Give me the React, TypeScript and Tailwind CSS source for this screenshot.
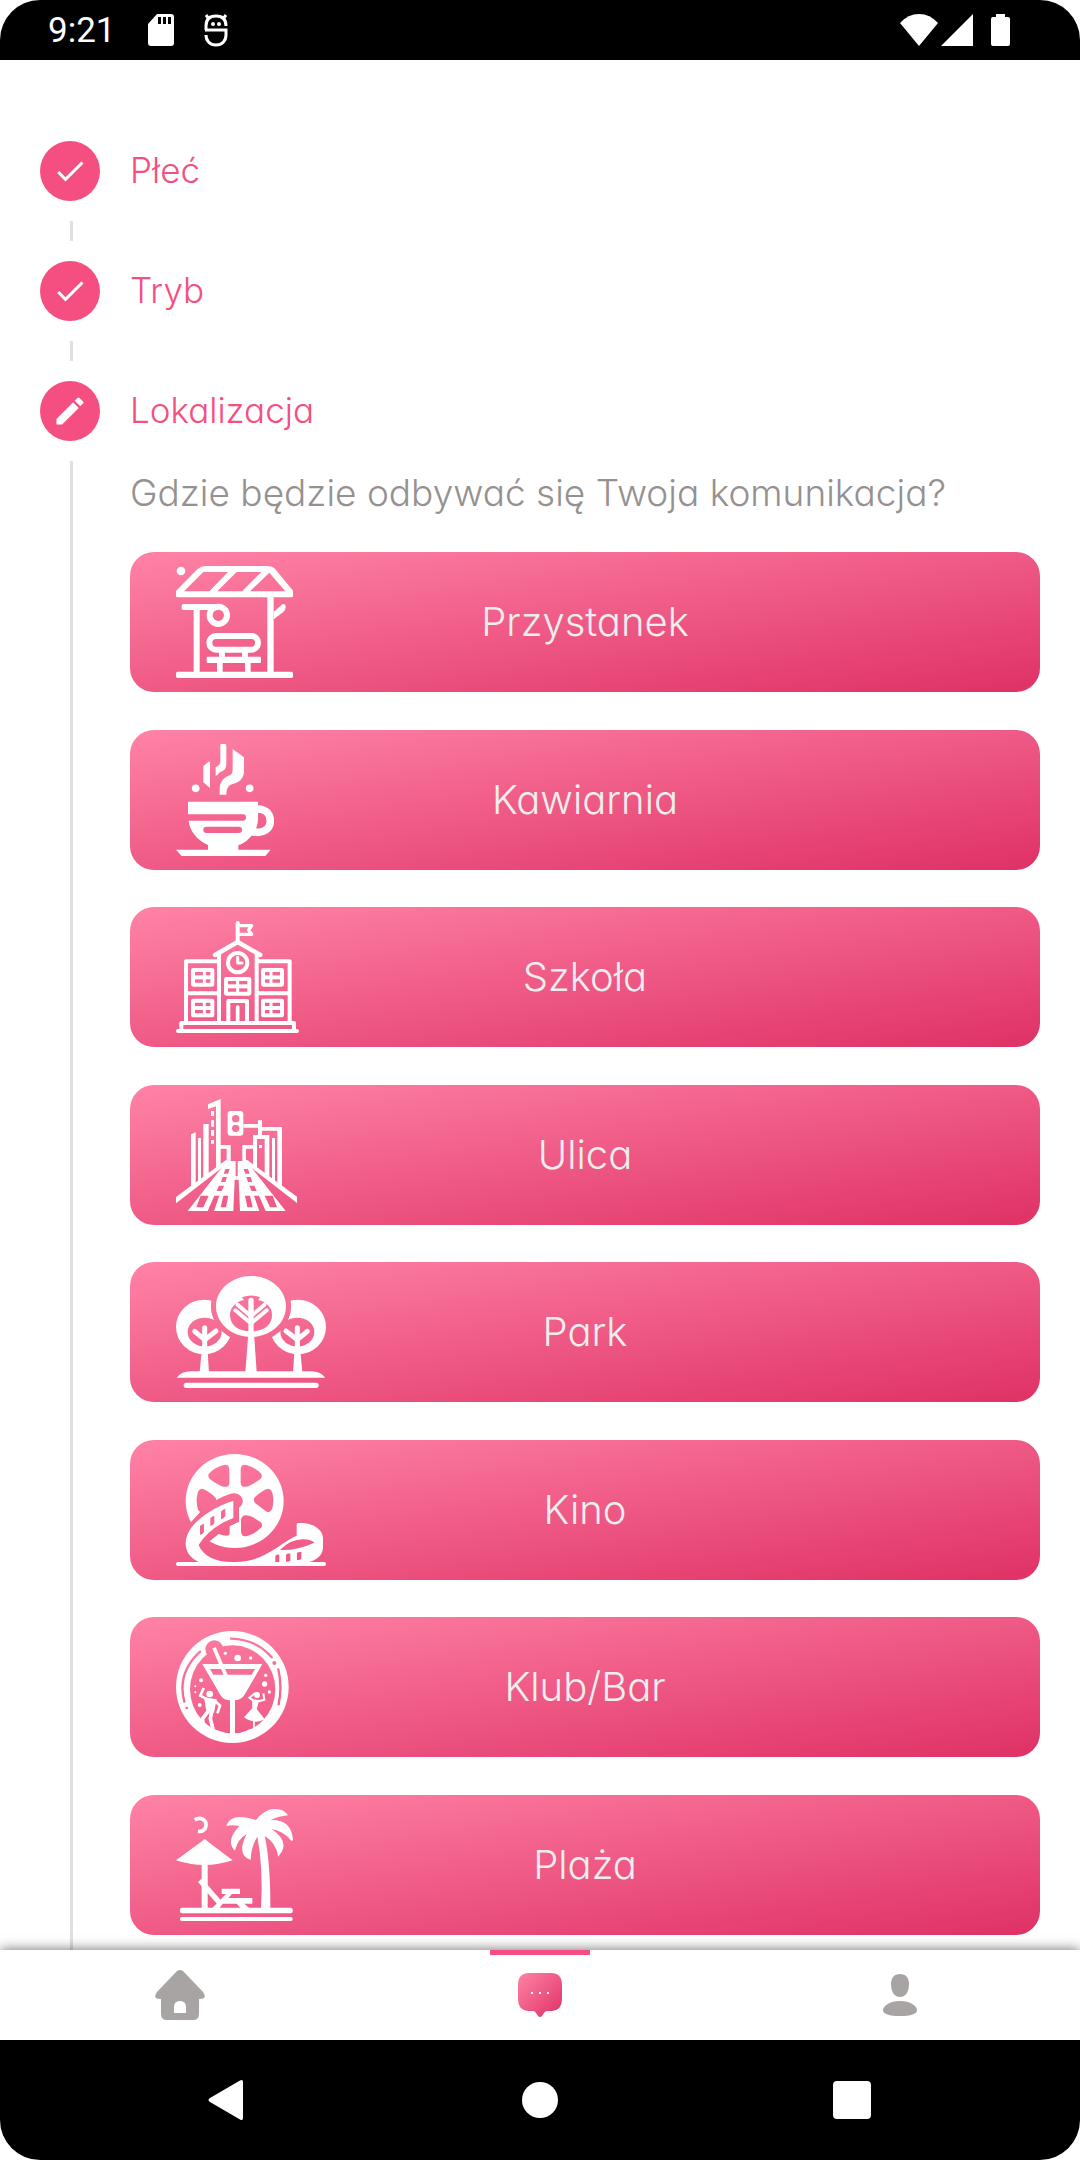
import React, { useState } from 'react';

function BusStopIcon() {
  return (
    <svg viewBox="168 78 351 336" className="h-28 w-auto" fill="#fff" aria-hidden="true">
      <circle cx="183" cy="93" r="13" />
      <path
        fillRule="evenodd"
        d="M168 168V153L232 88Q243 78 256 78H440Q457 78 466 88L519 152V168Q519 172 515 172H172Q168 172 168 168ZM192 154H268L324 96H250ZM292 154H366L424 96H350ZM390 154H496L448 98Z"
      />
      <rect x="168" y="395" width="351" height="19" rx="5" />
      <rect x="442" y="168" width="19" height="230" />
      <path d="M461 216L487 193Q497 190 497 200Q497 210 490 216L461 238Z" />
      <rect x="221" y="205" width="18" height="195" />
      <path d="M190 192H295V210H190Q185 210 185 205V197Q185 192 190 192Z" mask="url(#bus-sign)" />
      <mask id="bus-sign" maskUnits="userSpaceOnUse" x="160" y="70" width="370" height="350">
        <rect x="160" y="70" width="370" height="350" fill="#fff" />
        <circle cx="295" cy="226" r="26" fill="#000" />
      </mask>
      <circle cx="295" cy="226" r="26" fill="none" stroke="#fff" strokeWidth="18" />
      <rect x="268" y="288" width="146" height="41" rx="20" fill="none" stroke="#fff" strokeWidth="18" />
      <rect x="297" y="335" width="18" height="18" />
      <rect x="366" y="335" width="18" height="18" />
      <rect x="260" y="350" width="163" height="19" rx="3" />
      <rect x="291" y="366" width="17" height="32" />
      <rect x="375" y="366" width="17" height="32" />
    </svg>
  );
}

function CafeIcon() {
  return (
    <svg viewBox="168 72 295 336" className="h-28 w-auto" fill="#fff" aria-hidden="true">
      <path d="M250 138L266 125H270V204L250 187Z" />
      <path d="M301 75Q301 72 304 72H315Q319 72 319 76V128C319 150 312 150 301 156Q294 160 293 165L287 167V142Q301 134 301 126Z" />
      <path d="M338 87L372 112V153C372 180 352 189 338 192C325 196 320 205 319 224H299V208C299 185 312 172 330 166Q338 161 338 148Z" />
      <circle cx="227" cy="205" r="11.5" />
      <circle cx="389" cy="205" r="11.5" />
      <path
        fillRule="evenodd"
        d="M204 245H414V300C412 335 385 365 355 376V389H452L436 408H185L168 389H264V375C230 360 208 330 206 302H370Q378 302 378 292Q378 283 370 283H204ZM260 320Q250 320 250 329.500Q250 339 260 339H356Q366 339 366 329.500Q366 320 356 320Z"
      />
      <path d="M412 267C440 267 451 285 451 302C451 326 430 343 398 335" fill="none" stroke="#fff" strokeWidth="23" />
    </svg>
  );
}

function SchoolWindow({ x, y, w, bar }: { x: number; y: number; w: number; bar: number }) {
  return (
    <g>
      <rect x={x + 6} y={y + 6} width={w - 12} height="44" rx="1" strokeWidth="12" />
      <path d={`M${bar} ${y + 8}V${y + 48}`} strokeWidth="9" />
      <path d={`M${x + 8} ${y + 28}H${x + w - 8}`} strokeWidth="12" />
    </g>
  );
}

function SchoolIcon() {
  return (
    <svg viewBox="168 63 369 336" className="h-28 w-auto" fill="none" stroke="#fff" strokeWidth="12" strokeLinejoin="round" aria-hidden="true">
      <path d="M353 69V124" strokeLinecap="round" />
      <path d="M353 77H395L386 90L395 103H353" strokeWidth="10" />
      <path d="M285 165L353 126L421 165" strokeWidth="13" strokeLinecap="round" />
      <path d="M297 160V365M410 160V365" />
      <circle cx="353" cy="188" r="29" />
      <path d="M353 172V189H366" strokeWidth="9" strokeLinecap="round" />
      <path d="M198 365V184H293M509 365V184H414M198 280H297M410 280H509" />
      <SchoolWindow x={213} y={204} w={70} bar={253} />
      <SchoolWindow x={213} y={296} w={70} bar={253} />
      <SchoolWindow x={423} y={204} w={69} bar={453} />
      <SchoolWindow x={423} y={296} w={69} bar={453} />
      <SchoolWindow x={312} y={231} w={82} bar={353} />
      <path d="M325 365V303H381V365" />
      <path d="M353 365V321" strokeLinecap="round" strokeWidth="11" />
      <path d="M184 390V369H522V390" />
      <path d="M174 393H531" strokeLinecap="round" />
    </svg>
  );
}

function HalfRoad() {
  return (
    <>
      <path d="M168 351L318 240L332 243L300 268L168 370Z" />
      <path
        fillRule="evenodd"
        d="M203 393L306 262L330 243H347V288H350V299H344L340 393H282L298 347H283L263 393ZM242 347H266L250 382H229ZM310 347H325L318 382H302ZM316 267H329L324 281H311ZM308 291H321L316 306H303ZM297 317H312L305 333H290Z"
      />
    </>
  );
}

function StreetIcon() {
  return (
    <svg viewBox="168 57 363 336" className="h-28 w-auto" fill="#fff" aria-hidden="true">
      <path d="M264 73L302 57V256L288 266V79L264 87Z" />
      <path d="M273 93H282V108H273ZM273 121H282V140H273ZM273 150H282V167H273ZM273 180H282V191H273Z" />
      <path d="M250 132H266V284L250 295ZM234 174H243V300L234 306ZM213 163L227 157V310L213 320Z" />
      <path
        fillRule="evenodd"
        d="M332 93H361Q370 93 370 102V158Q370 167 361 167H332Q323 167 323 158V102Q323 93 332 93ZM347 105A11 11 0 1 0 347 127A11 11 0 1 0 347 105ZM347 134A11 11 0 1 0 347 156A11 11 0 1 0 347 134Z"
      />
      <path d="M370 132H414V121H426V141H486V320L472 310V152H426V165H448V292L434 282V177H411V265L399 256V165H414V143H370Z" />
      <path d="M417 195H426V204H417ZM456 174H465V303L456 297Z" />
      <path d="M300 195H332V245H320V206H300ZM399 195V206H378V245H367V195Z" />
      <HalfRoad />
      <g transform="matrix(-1 0 0 1 700 0)">
        <HalfRoad />
      </g>
    </svg>
  );
}

function SideTree() {
  return (
    <>
      <ellipse cx="252" cy="216" rx="84" ry="82" mask="url(#side-tree)" />
      <path d="M254 218V300M224 229L254 254M288 228L254 254" fill="none" stroke="#fff" strokeWidth="15" strokeLinecap="round" />
      <path d="M246 275L239 352H267L262 275Z" />
    </>
  );
}

function ParkIcon() {
  return (
    <svg viewBox="168 63 450 336" className="h-28 w-auto" fill="#fff" aria-hidden="true">
      <mask id="side-tree" maskUnits="userSpaceOnUse" x="160" y="60" width="470" height="340">
        <rect x="160" y="60" width="470" height="340" fill="#fff" />
        <ellipse cx="254" cy="231" rx="51" ry="43" fill="#000" />
        <ellipse cx="393" cy="154" rx="120" ry="108" fill="#000" />
      </mask>
      <mask id="side-branches" maskUnits="userSpaceOnUse" x="160" y="60" width="470" height="340">
        <rect x="160" y="60" width="470" height="340" fill="#fff" />
        <ellipse cx="393" cy="154" rx="120" ry="108" fill="#000" />
      </mask>
      <g mask="url(#side-branches)">
        <SideTree />
        <g transform="matrix(-1 0 0 1 786 0)">
          <SideTree />
        </g>
      </g>
      <path
        fillRule="evenodd"
        d="M393 63C451 63 498 104 498 154C498 205 451 246 393 246C335 246 288 205 288 154C288 104 335 63 393 63ZM366 127L372 136Q358 136 346 148Q330 160 330 180C330 208 352 229 393 229C434 229 456 208 456 180Q456 160 440 148Q428 136 414 136L420 127Q393 116 366 127Z"
      />
      <path d="M393 136V240" fill="none" stroke="#fff" strokeWidth="16" strokeLinecap="round" />
      <path d="M353 149L393 184L433 149M346 166L393 205L440 166" fill="none" stroke="#fff" strokeWidth="12" strokeLinecap="round" />
      <path d="M385 235L376 352H410L402 235Z" />
      <path d="M170 368Q185 349 212 349H574Q600 349 616 368Z" />
      <rect x="191" y="383" width="405" height="16" rx="8" />
    </svg>
  );
}

function CinemaIcon() {
  return (
    <svg viewBox="168 57 450 336" className="h-28 w-auto" fill="#fff" aria-hidden="true">
      <mask id="reel" maskUnits="userSpaceOnUse" x="160" y="50" width="470" height="350">
        <rect x="160" y="50" width="470" height="350" fill="#fff" />
        <g fill="#000">
          <path d="M266 117Q262 124 268 131Q288 146 305 154Q328 160 328 143V105Q328 85 308 91Q283 98 266 117Z" />
          <path d="M424 117Q428 124 422 131Q402 146 385 154Q362 160 362 143V105Q362 85 382 91Q407 98 424 117Z" />
          <path d="M402 190Q400 199 406 205L440 230Q450 235 456 222Q464 195 456 170Q450 158 438 163Q415 175 402 190Z" />
          <path d="M288 190Q290 199 284 205L250 240L234 225Q226 195 234 170Q240 158 252 163Q275 175 288 190Z" />
          <path d="M363 254V288Q363 308 382 303Q408 295 424 277Q429 270 422 262Q405 249 390 243Q366 236 363 254Z" />
          <path d="M329 260V296Q326 308 296 297L270 318L250 345L150 350V268H207L240 232C280 195 320 178 340 175C368 174 378 205 357 218V260L329 274Z" />
        </g>
      </mask>
      <ellipse cx="344" cy="198" rx="147" ry="141" mask="url(#reel)" />
      <path
        fillRule="evenodd"
        d="M340 197V249Q270 275 236 330C250 365 290 383 345 381C400 381 430 362 460 345C490 325 510 310 530 302V268Q530 264 534 264H550C590 268 609 290 609 310V340C605 365 590 375 562 383H240C210 370 197 350 197 325C197 270 270 220 340 197ZM480 345Q530 347 583 323Q575 314 550 313Q512 312 480 345ZM240 299V274Q240 270 252 266V290Q250 297 240 299ZM271 273V250Q274 244 283 242V264Q280 270 271 273ZM303 253V230Q306 224 316 221V243Q313 250 303 253ZM466 382V362Q470 358 478 359V382ZM498 380V359Q502 355 511 356V377Q507 381 498 380ZM531 375V354Q535 350 544 351V372Q540 376 531 375Z"
      />
      <rect x="168" y="381" width="450" height="12" rx="6" />
    </svg>
  );
}

function ClubIcon() {
  return (
    <svg viewBox="168 63 339 336" className="h-28 w-auto" fill="#fff" aria-hidden="true">
      <mask id="club-ring" maskUnits="userSpaceOnUse" x="160" y="55" width="360" height="350">
        <rect x="160" y="55" width="360" height="350" fill="#fff" />
        <ellipse cx="338" cy="238" rx="128" ry="132" fill="#000" />
        <circle cx="283" cy="118" r="27" fill="#000" />
        <path d="M333 86Q410 88 455 142M475 178Q487 230 476 283M240 125Q170 190 193 275" fill="none" stroke="#000" strokeWidth="7" strokeLinecap="round" />
        <circle cx="463" cy="159" r="6" fill="#000" />
        <circle cx="200" cy="294" r="4" fill="#000" />
      </mask>
      <ellipse cx="337" cy="231" rx="169" ry="168" mask="url(#club-ring)" />
      <path
        fillRule="evenodd"
        d="M247 162H427L375 252Q365 270 345 271V375H330V271Q313 271 303 258ZM270 177L280 194H395L405 177Z"
      />
      <path d="M282 113L318 197" stroke="#fff" strokeWidth="11" />
      <circle cx="316" cy="130" r="5" />
      <circle cx="353" cy="144" r="10" />
      <circle cx="392" cy="144" r="5" />
      <circle cx="437" cy="196" r="5" />
      <circle cx="434" cy="222" r="8" />
      <circle cx="448" cy="246" r="5" />
      <circle cx="243" cy="211" r="6" />
      <circle cx="226" cy="229" r="3" />
      <circle cx="226" cy="247" r="3" />
      <circle cx="239" cy="285" r="6" />
      <circle cx="269" cy="252" r="10" />
      <path d="M251 234L241 257L262 268" fill="none" stroke="#fff" strokeWidth="8" />
      <path d="M252 262L290 268L282 308H260Z" />
      <path d="M283 271L300 287L292 310" fill="none" stroke="#fff" strokeWidth="8" />
      <path d="M268 300L248 325L250 355M276 300L271 325L280 362" fill="none" stroke="#fff" strokeWidth="11" />
      <circle cx="411" cy="255" r="9" />
      <path d="M403 274L388 263L406 249M416 274L433 269L430 250" fill="none" stroke="#fff" strokeWidth="6" />
      <path d="M396 268L418 270L410 297L434 328Q405 345 372 322L397 295Z" />
      <path d="M402 330V368" stroke="#fff" strokeWidth="5" />
      <path d="M466 300Q450 312 452 326Q456 342 440 352H420Q412 350 406 360Q388 352 376 366L400 380L450 350Z" />
      <ellipse cx="262" cy="358" rx="26" ry="9" transform="rotate(28 262 358)" />
    </svg>
  );
}

function BeachIcon() {
  return (
    <svg viewBox="168 57 351 336" className="h-28 w-auto" fill="#fff" aria-hidden="true">
      <path d="M224 89C244 79 258 90 258 104C258 118 248 126 234 124" fill="none" stroke="#fff" strokeWidth="11" />
      <path d="M168 211L246 154Q254 142 262 154L338 211Q295 225 254 225Q210 225 168 211Z" />
      <rect x="245" y="222" width="18" height="133" />
      <path d="M240 271L302 342" stroke="#fff" strokeWidth="16" />
      <path d="M305 296H360V312H336L325 324H397V341H373L389 355H362L350 341H308L298 355H276L318 312H305Z" />
      <rect x="180" y="353" width="338" height="17" rx="6" />
      <rect x="180" y="381" width="338" height="12" rx="5" />
      <path d="M412 138Q430 235 423 355H451Q452 225 434 136Z" />
      <path d="M408 90Q436 54 470 57Q495 60 504 76Q472 80 452 90Q515 88 519 150L515 154Q490 122 454 117Q502 148 487 182L475 200Q468 158 434 138L412 140Q393 170 392 210Q348 194 380 132Q352 148 345 182Q315 154 358 108Q338 104 319 108Q332 66 408 90Z" />
    </svg>
  );
}

const places = [
  { name: 'Przystanek', Icon: BusStopIcon },
  { name: 'Kawiarnia', Icon: CafeIcon },
  { name: 'Szkoła', Icon: SchoolIcon },
  { name: 'Ulica', Icon: StreetIcon },
  { name: 'Park', Icon: ParkIcon },
  { name: 'Kino', Icon: CinemaIcon },
  { name: 'Klub/Bar', Icon: ClubIcon },
  { name: 'Plaża', Icon: BeachIcon },
];

function StatusBar() {
  return (
    <header className="flex h-15 shrink-0 items-center justify-between rounded-t-[40px] bg-black pr-[70px] pl-12 text-white">
      <div className="flex items-center">
        <time className="font-[Roboto,sans-serif] text-[35px] leading-none">9:21</time>
        <svg viewBox="0 0 26 32" className="ml-8 h-8 w-[26px]" fill="#fff" aria-hidden="true">
          <path fillRule="evenodd" d="M9 0H23Q26 0 26 3V29Q26 32 23 32H3Q0 32 0 29V10ZM10 3V10H13V3ZM15 3V10H18V3ZM20 3V10H23V3Z" />
        </svg>
        <svg viewBox="0 0 24 34" className="ml-[30px] h-[34px] w-6" fill="none" stroke="#fff" strokeWidth="3" aria-hidden="true">
          <path d="M2 17V13C2 6 6 3 12 3C18 3 22 6 22 13M2 2L5 6M22 2L19 6M1 17H22V22C22 28 18 32 12 32C6 32 2 28 2 22" />
          <circle cx="9" cy="11" r="2" fill="#fff" stroke="none" />
          <circle cx="15" cy="11" r="2" fill="#fff" stroke="none" />
        </svg>
      </div>
      <div className="flex items-center" aria-hidden="true">
        <svg viewBox="0 0 38 32" className="h-8 w-[38px]" fill="#fff">
          <path d="M19 32L0 9Q8 0 19 0Q30 0 38 9Z" />
        </svg>
        <svg viewBox="0 0 32 32" className="ml-[3px] size-8" fill="#fff">
          <path d="M32 0V32H0Z" />
        </svg>
        <svg viewBox="0 0 19 32" className="ml-[18px] h-8 w-[19px]" fill="#fff">
          <path d="M5 0H14V3H17Q19 3 19 5V30Q19 32 17 32H2Q0 32 0 30V5Q0 3 2 3H5Z" />
        </svg>
      </div>
    </header>
  );
}

function StepHeader({ label, editing = false }: { label: string; editing?: boolean }) {
  return (
    <button type="button" className="flex items-center gap-[30px] text-left text-[35px] leading-[58px] font-[350] text-[#f44f80]">
      <span className="flex size-15 items-center justify-center rounded-full bg-[#f44f80]">
        <svg viewBox="0 0 24 24" className="size-9" fill="#fff" aria-hidden="true">
          {editing ? (
            <path d="M3 17.250V21h3.750L17.810 9.940l-3.750-3.750L3 17.250zM20.710 7.040a1 1 0 0 0 0-1.410l-2.340-2.340a1 1 0 0 0-1.410 0l-1.830 1.830 3.750 3.750 1.830-1.830z" />
          ) : (
            <path d="M9 16.170L4.830 12l-1.420 1.410L9 19 21 7l-1.410-1.410z" />
          )}
        </svg>
      </span>
      <span className="pb-0.5">{label}</span>
    </button>
  );
}

function HomeIcon() {
  return (
    <svg viewBox="0 0 50 50" className="size-[50px]" fill="#a8a4a4" aria-hidden="true">
      <path
        fillRule="evenodd"
        d="M22 1Q25 -1 28 1L48 22Q51 26 49 28Q48 29 44 29V44Q44 50 38 50H12Q6 50 6 44V29Q2 29 1 28Q-1 26 2 22ZM19 43H31V37Q31 31 25 31Q19 31 19 37Z"
      />
    </svg>
  );
}

function ChatIcon() {
  return (
    <svg viewBox="0 0 44 44" className="size-11" aria-hidden="true">
      <linearGradient id="chat-fill" x1="0" y1="0" x2="1" y2="1">
        <stop offset="0" stopColor="#ff83a6" />
        <stop offset="1" stopColor="#df3165" />
      </linearGradient>
      <path d="M11 0H33Q44 0 44 12V26Q44 37 34 38H29Q27 38 26 40L24 43Q22 45 20 43L18 40Q17 38 15 38H10Q0 37 0 26V12Q0 0 11 0Z" fill="url(#chat-fill)" />
      <path d="M13 19H15V21H13ZM21 19H23V21H21ZM29 19H31V21H29Z" fill="#fff" />
    </svg>
  );
}

function PersonIcon() {
  return (
    <svg viewBox="0 0 34 42" className="h-[42px] w-[34px]" fill="#a8a4a4" aria-hidden="true">
      <path d="M17 0C23 0 26 4 26 10C26 17 23 23 17 23C11 23 8 17 8 10C8 4 11 0 17 0Z" />
      <path d="M17 27C27 27 34 32 34 36C34 40 28 42 17 42C6 42 0 40 0 36C0 32 7 27 17 27Z" />
    </svg>
  );
}

const tabs = [
  { id: 'home', label: 'Strona główna', Icon: HomeIcon },
  { id: 'chat', label: 'Komunikacja', Icon: ChatIcon },
  { id: 'profile', label: 'Profil', Icon: PersonIcon },
];

export default function App() {
  const [tab, setTab] = useState('chat');
  return (
    <div className="flex min-h-screen flex-col bg-white font-[Inter,sans-serif] [font-feature-settings:'cv11']">
      <StatusBar />
      <main className="flex flex-1 flex-col px-10 pt-[81px]">
        <StepHeader label="Płeć" />
        <div className="my-5 ml-[30px] h-5 w-[3px] bg-[#e0e0e0]" />
        <StepHeader label="Tryb" />
        <div className="my-5 ml-[30px] h-5 w-[3px] bg-[#e0e0e0]" />
        <StepHeader label="Lokalizacja" editing />
        <div className="mt-5 flex flex-1">
          <div className="ml-[30px] w-[3px] shrink-0 bg-[#e0e0e0]" />
          <section className="ml-[57px] flex flex-1 flex-col pt-2 pb-[15px]">
            <h1 className="text-[37px] leading-12 font-[350] text-[#959191]">Gdzie będzie odbywać się Twoja komunikacja?</h1>
            <div className="mt-[35px] flex flex-1 flex-col justify-between gap-3">
              {places.map(({ name, Icon }) => (
                <button
                  key={name}
                  type="button"
                  className="grid h-35 grid-cols-[1fr_auto_1fr] items-center rounded-3xl bg-[linear-gradient(to_bottom_right,#ff83a6,#df3165)] px-[46px] text-[40px] font-[350] text-[#eeeeee]"
                >
                  <Icon />
                  <span>{name}</span>
                </button>
              ))}
            </div>
          </section>
        </div>
      </main>
      <nav className="grid h-[90px] shrink-0 grid-cols-3 bg-white shadow-[0_0_12px_rgba(0,0,0,0.6)]">
        {tabs.map(({ id, label, Icon }) => (
          <button
            key={id}
            type="button"
            aria-label={label}
            aria-current={tab === id ? 'page' : undefined}
            onClick={() => setTab(id)}
            className="flex flex-col items-center"
          >
            <span className={tab === id ? 'h-[5px] w-[100px] bg-[#f44f80]' : 'h-[5px] w-[100px]'} />
            <span className="flex flex-1 items-center pb-[5px]">
              <Icon />
            </span>
          </button>
        ))}
      </nav>
      <footer className="z-10 bg-white">
        <div className="grid h-30 grid-cols-3 rounded-b-[40px] bg-black px-[72px]">
          <button type="button" aria-label="Wstecz" className="flex items-center justify-center">
            <svg viewBox="0 0 40 40" className="size-10" fill="#fff" aria-hidden="true">
              <path d="M35 2V38Q35 41 32 39.500L2 22Q-1 20 2 18L32 0.500Q35 -1 35 2Z" />
            </svg>
          </button>
          <button type="button" aria-label="Ekran główny" className="flex items-center justify-center">
            <span className="size-9 rounded-full bg-white" />
          </button>
          <button type="button" aria-label="Ostatnie" className="flex items-center justify-center">
            <span className="size-[38px] rounded-sm bg-white" />
          </button>
        </div>
      </footer>
    </div>
  );
}
